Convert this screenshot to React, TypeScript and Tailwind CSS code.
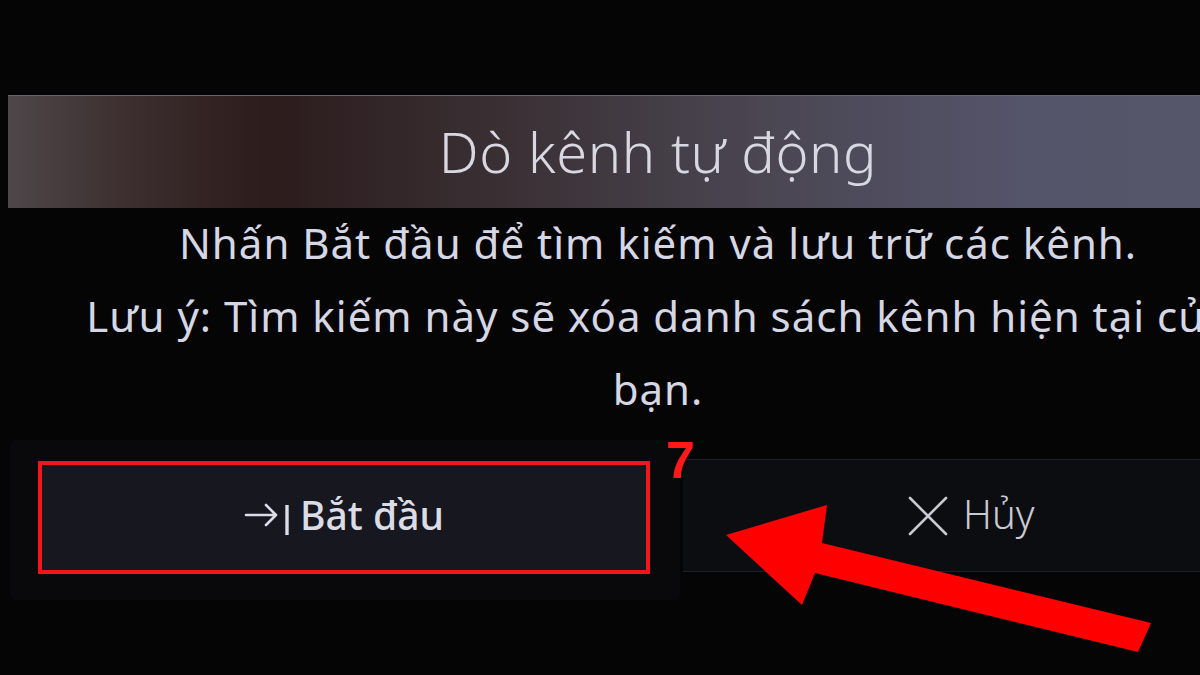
import React from "react";

const font = { fontFamily: '"Noto Sans", "Open Sans", sans-serif' };

function StartIcon() {
  return (
    <svg width="46" height="34" viewBox="0 0 46 34" fill="none" className="mr-[10px] mt-[2px]">
      <path d="M2 13H32M22 3L32 13L22 23" stroke="#dcdce6" strokeWidth="2.6" strokeLinecap="round" strokeLinejoin="round" />
      <path d="M43 3V33" stroke="#dcdce6" strokeWidth="3.4" />
    </svg>
  );
}

function CloseIcon() {
  return (
    <svg width="40" height="40" viewBox="0 0 40 40" fill="none" className="mr-[15px]">
      <path d="M2 2L38 38M38 2L2 38" stroke="#c9c9d2" strokeWidth="2.6" strokeLinecap="round" />
    </svg>
  );
}

export default function App() {
  return (
    <div className="relative h-[675px] w-[1200px] overflow-hidden bg-[#050506]" style={font}>
      <div className="w-[1300px] pt-[95px]">
        <div className="ml-[8px] w-[1300px]">
          {/* title bar */}
          <div className="flex h-[113px] items-center justify-center border-t border-[#66646f] bg-[linear-gradient(to_right,#4e474a_0%,#3d2f2f_9%,#2c1c1c_20%,#3a3034_38%,#4a4652_58%,#54546a_78%,#575769_100%)]">
            <h1 className="pb-[2px] text-[56px] font-light tracking-[0.6px] text-[#d8d8e2]">Dò kênh tự động</h1>
          </div>

          {/* message */}
          <div className="whitespace-nowrap text-center text-[42px] leading-[73px] tracking-[1px] text-[#d6d7e4]">
            <p className="-mt-[2px]">Nhấn Bắt đầu để tìm kiếm và lưu trữ các kênh.</p>
            <p>Lưu ý: Tìm kiếm này sẽ xóa danh sách kênh hiện tại của</p>
            <p>bạn.</p>
          </div>

          {/* buttons */}
          <div className="mt-[15px] flex items-start">
            <div className="ml-[2px] h-[160px] w-[670px] rounded-md bg-[#09090b] pl-[28px] pt-[21px]">
              <button className="flex h-[113px] w-[612px] items-center justify-center border-[4px] border-[#f2161b] bg-[#16171f] text-[39px] font-medium text-[#dcdce6]">
                <StartIcon />
                <span className="pb-[4px]">Bắt đầu</span>
              </button>
            </div>
            <button className="ml-[3px] mt-[19px] flex h-[113px] flex-1 items-center border-y border-[#1d1f26] bg-[#0c0d11] pl-[225px] text-[40px] font-light text-[#c9c9d2]">
              <CloseIcon />
              <span className="pb-[4px]">Hủy</span>
            </button>
          </div>
        </div>
      </div>

      {/* step number */}
      <span className="absolute left-[666px] top-[434px] text-[52px] font-bold leading-none text-[#ff1a1a]" style={{ fontFamily: '"Liberation Sans", Arial, sans-serif' }}>
        7
      </span>

      {/* pointer arrow */}
      <svg className="pointer-events-none absolute left-0 top-0" width="1200" height="675" viewBox="0 0 1200 675">
        <polygon points="726,535 827,505 822,543 1151,623 1138,652 815,573 802,605" fill="#ff0000" />
      </svg>
    </div>
  );
}
